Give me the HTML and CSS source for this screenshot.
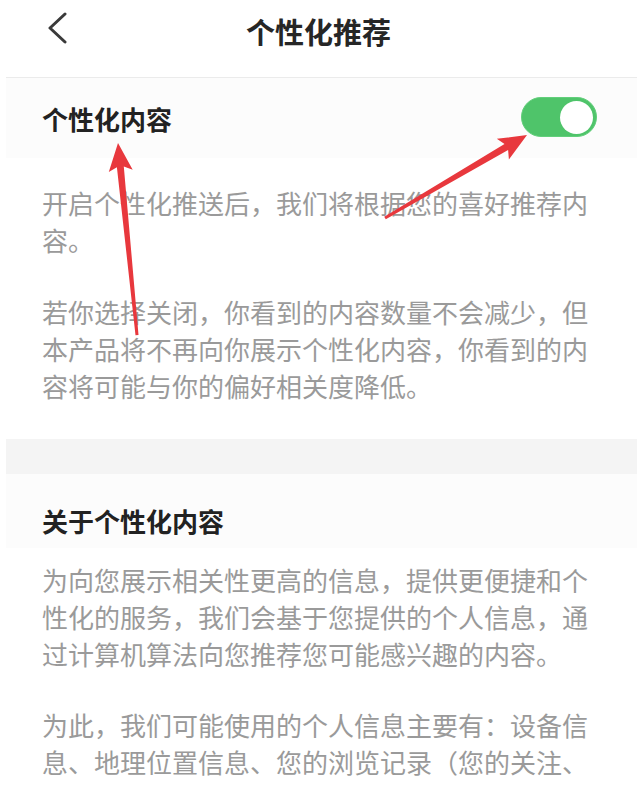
FILE: index.html
```html
<!DOCTYPE html>
<html lang="zh-CN">
<head>
<meta charset="utf-8">
<title>个性化推荐</title>
<link rel="stylesheet" href="styles.css">
</head>
<body>
<div class="page">
  <header class="topbar">
    <svg class="back" width="24" height="34" viewBox="0 0 24 34" aria-hidden="true">
      <polyline points="19,2 4,16 19,30" fill="none" stroke="#3a3a3a" stroke-width="3" stroke-linecap="round" stroke-linejoin="round"/>
    </svg>
    <h1 class="title">个性化推荐</h1>
  </header>

  <section class="block">
    <div class="row row-first">
      <h2 class="heading">个性化内容</h2>
      <div class="switch on"><span class="knob"></span></div>
    </div>
    <p class="text t1">开启个性化推送后，我们将根据您的喜好推荐内容。</p>
    <p class="text t2">若你选择关闭，你看到的内容数量不会减少，但本产品将不再向你展示个性化内容，你看到的内容将可能与你的偏好相关度降低。</p>
  </section>

  <div class="band"></div>

  <section class="block">
    <div class="row row-second">
      <h2 class="heading">关于个性化内容</h2>
    </div>
    <p class="text t3">为向您展示相关性更高的信息，提供更便捷和个性化的服务，我们会基于您提供的个人信息，通过计算机算法向您推荐您可能感兴趣的内容。</p>
    <p class="text t4">为此，我们可能使用的个人信息主要有：设备信息、地理位置信息、您的浏览记录（您的关注、</p>
  </section>

  <svg class="marks" width="637" height="790" viewBox="0 0 637 790" aria-hidden="true">
    <polygon fill="#e8383d" points="118,143 132.7,169.7 123.8,166.5 138.5,334.9 135.5,335.2 116.9,167.2 108.8,172.0"/>
    <polygon fill="#e8383d" points="527,135 496.8,138.8 504.5,144.1 384.2,216.7 385.8,219.3 508.1,150.1 508.9,159.5"/>
  </svg>
</div>
</body>
</html>
```

FILE: styles.css
```css
html, body {
  margin: 0;
  padding: 0;
  background: #ffffff;
}

body {
  font-family: "Noto Sans CJK SC", "Noto Sans", sans-serif;
  color: #222222;
}

.page {
  position: relative;
  margin-left: 6px;
  background: #ffffff;
  overflow: hidden;
  height: 790px;
}

.topbar {
  height: 77px;
  border-bottom: 1px solid #ebebeb;
  display: flex;
  justify-content: center;
  align-items: flex-start;
  position: relative;
}

.back {
  position: absolute;
  left: 40px;
  top: 12px;
}

.title {
  margin: 0;
  font-size: 29px;
  font-weight: 700;
  line-height: 62px;
  color: #262626;
  margin-right: 6px;
}

.block {
  padding: 0 42px 0 36px;
}

.row {
  display: flex;
  align-items: center;
  justify-content: space-between;
  margin: 0 -42px 0 -36px;
  padding: 0 40px 0 36px;
  background: #fcfcfc;
}

.row-first {
  height: 80px;
}

.row-second {
  padding-top: 27px;
  padding-bottom: 8px;
}

.heading {
  margin: 0;
  font-size: 26px;
  font-weight: 700;
  line-height: 39px;
  color: #222222;
}

.switch {
  width: 76px;
  height: 40px;
  border-radius: 20px;
  background: #4fc46a;
  box-sizing: border-box;
  border: 1px solid #62cf7b;
  display: flex;
  align-items: center;
  justify-content: flex-end;
  padding: 0 3px;
  margin-top: -2px;
}

.knob {
  width: 33px;
  height: 33px;
  border-radius: 50%;
  background: #ffffff;
}

.text {
  margin: 0;
  font-size: 26px;
  line-height: 37px;
  color: #9a9a9a;
}

.t1 { margin-top: 26px; }
.t2 { margin-top: 35px; padding-bottom: 35px; }
.t3 { margin-top: 13px; }
.t4 { margin-top: 34px; }

.band {
  height: 35px;
  background: #f4f4f4;
}

.marks {
  position: absolute;
  left: -6px;
  top: 0;
  pointer-events: none;
}
```
